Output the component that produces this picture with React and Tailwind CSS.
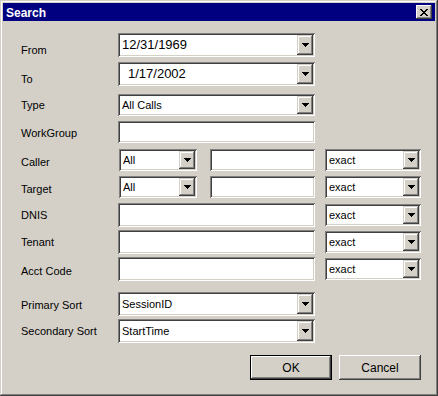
import React from "react";

const FONT = { fontFamily: '"Liberation Sans", Arial, sans-serif' };

function Arrow() {
  return (
    <svg width="7" height="4" viewBox="0 0 7 4" shapeRendering="crispEdges">
      <rect x="0" y="0" width="7" height="1" fill="#000" />
      <rect x="1" y="1" width="5" height="1" fill="#000" />
      <rect x="2" y="2" width="3" height="1" fill="#000" />
      <rect x="3" y="3" width="1" height="1" fill="#000" />
    </svg>
  );
}

function Combo({ w, h, text, textClass = "text-[11px] pl-[2px]" }) {
  return (
    <div
      className="flex shrink-0 bg-white p-[2px] shadow-[inset_1px_1px_#808080,inset_-1px_-1px_#ffffff,inset_2px_2px_#404040,inset_-2px_-2px_#d4d0c8]"
      style={{ width: w, height: h }}
    >
      <div className={`flex flex-1 items-center text-black ${textClass}`}>{text}</div>
      <div className="flex w-[16px] items-center justify-center bg-[#d4d0c8] shadow-[inset_-1px_-1px_#404040,inset_1px_1px_#d4d0c8,inset_-2px_-2px_#808080,inset_2px_2px_#ffffff]">
        <Arrow />
      </div>
    </div>
  );
}

function Field({ w, h }) {
  return (
    <div
      className="shrink-0 bg-white shadow-[inset_1px_1px_#808080,inset_-1px_-1px_#ffffff,inset_2px_2px_#404040,inset_-2px_-2px_#d4d0c8]"
      style={{ width: w, height: h }}
    />
  );
}

function Label({ children, off = 0 }) {
  return (
    <div className="w-[97px] shrink-0 text-[11px] text-black" style={{ paddingTop: off }}>
      {children}
    </div>
  );
}

export default function App() {
  return (
    <div
      className="flex h-[396px] w-[438px] flex-col bg-[#d4d0c8] p-[3px] shadow-[inset_-1px_-1px_#404040,inset_1px_1px_#d4d0c8,inset_-2px_-2px_#808080,inset_2px_2px_#ffffff]"
      style={FONT}
    >
      <div className="flex h-[18px] items-center justify-between bg-[#000080] pl-[3px] pr-[3px]">
        <span className="pt-[1px] text-[12px] font-bold text-white">Search</span>
        <div className="flex h-[14px] w-[16px] items-center justify-center bg-[#d4d0c8] shadow-[inset_-1px_-1px_#404040,inset_1px_1px_#ffffff,inset_-2px_-2px_#808080,inset_2px_2px_#d4d0c8]">
          <svg width="8" height="7" viewBox="0 0 8 7" shapeRendering="crispEdges">
            <path d="M0 0h2v1H0zM6 0h2v1H6zM1 1h2v1H1zM5 1h2v1H5zM2 2h4v1H2zM3 3h2v1H3zM2 4h4v1H2zM1 5h2v1H1zM5 5h2v1H5zM0 6h2v1H0zM6 6h2v1H6z" fill="#000" />
          </svg>
        </div>
      </div>

      <div className="flex flex-col pl-[18px]">
        <div className="mt-[12px] flex h-[24px] items-start">
          <Label off={9}>From</Label>
          <Combo w={197} h={24} text="12/31/1969" textClass="text-[13px] pl-[2px]" />
        </div>
        <div className="mt-[5px] flex h-[24px] items-start">
          <Label off={9}>To</Label>
          <Combo w={197} h={24} text="1/17/2002" textClass="text-[13px] pl-[8px]" />
        </div>
        <div className="mt-[8px] flex h-[22px] items-center">
          <Label>Type</Label>
          <Combo w={197} h={22} text="All Calls" />
        </div>
        <div className="mt-[5px] flex h-[22px] items-center">
          <Label off={3}>WorkGroup</Label>
          <Field w={197} h={22} />
        </div>
        <div className="mt-[6px] flex h-[22px] items-center">
          <Label off={4}>Caller</Label>
          <div className="ml-[1px]">
            <Combo w={78} h={22} text="All" />
          </div>
          <div className="ml-[13px]">
            <Field w={105} h={22} />
          </div>
          <div className="ml-[10px]">
            <Combo w={96} h={22} text="exact" />
          </div>
        </div>
        <div className="mt-[5px] flex h-[22px] items-center">
          <Label off={4}>Target</Label>
          <div className="ml-[1px]">
            <Combo w={78} h={22} text="All" />
          </div>
          <div className="ml-[13px]">
            <Field w={105} h={22} />
          </div>
          <div className="ml-[10px]">
            <Combo w={96} h={22} text="exact" />
          </div>
        </div>
        <div className="mt-[5px] flex h-[24px] items-center">
          <Label off={1}>DNIS</Label>
          <Field w={197} h={24} />
          <div className="ml-[10px]">
            <Combo w={96} h={22} text="exact" />
          </div>
        </div>
        <div className="mt-[3px] flex h-[24px] items-center">
          <Label off={1}>Tenant</Label>
          <Field w={197} h={24} />
          <div className="ml-[10px]">
            <Combo w={96} h={22} text="exact" />
          </div>
        </div>
        <div className="mt-[3px] flex h-[24px] items-center">
          <Label off={4}>Acct Code</Label>
          <Field w={197} h={24} />
          <div className="ml-[10px]">
            <Combo w={96} h={22} text="exact" />
          </div>
        </div>
        <div className="mt-[11px] flex h-[24px] items-center">
          <Label off={3}>Primary Sort</Label>
          <Combo w={197} h={24} text="SessionID" />
        </div>
        <div className="mt-[3px] flex h-[24px] items-center">
          <Label off={1}>Secondary Sort</Label>
          <Combo w={197} h={24} text="StartTime" />
        </div>
      </div>

      <div className="mt-[12px] flex justify-end gap-[7px] pr-[14px]">
        <button className="flex h-[25px] w-[82px] items-center justify-center bg-[#d4d0c8] text-[12px] text-black shadow-[inset_1px_1px_#000000,inset_-1px_-1px_#000000,inset_-2px_-2px_#404040,inset_2px_2px_#ffffff,inset_-3px_-3px_#808080]">
          OK
        </button>
        <button className="flex h-[25px] w-[82px] items-center justify-center bg-[#d4d0c8] text-[12px] text-black shadow-[inset_-1px_-1px_#404040,inset_1px_1px_#ffffff,inset_-2px_-2px_#808080,inset_2px_2px_#d4d0c8]">
          Cancel
        </button>
      </div>
    </div>
  );
}
